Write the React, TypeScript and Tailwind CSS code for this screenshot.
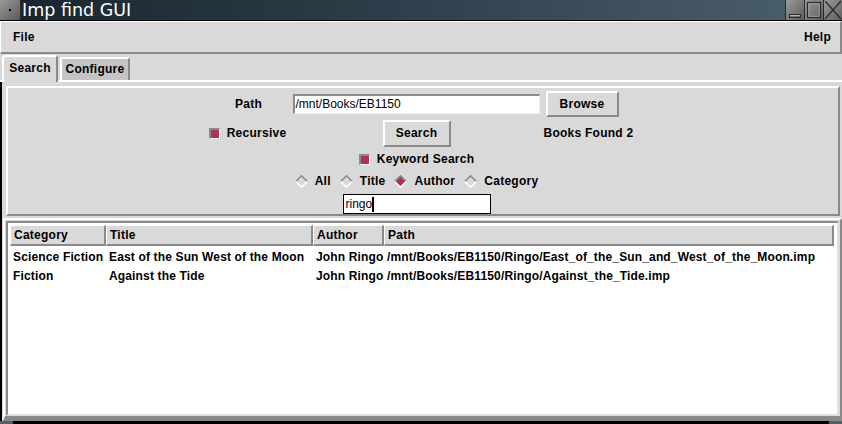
import React from "react";

const raised =
  "border-t-2 border-l-2 border-b-2 border-r-2 border-t-white border-l-white border-b-[#8a8a8a] border-r-[#8a8a8a]";

function Check() {
  return (
    <span className="inline-block w-[11px] h-[11px] border-t-2 border-l-2 border-t-[#8a8a8a] border-l-[#8a8a8a] border-b border-r border-b-white border-r-white bg-[#b03060]" />
  );
}

function Radio({ on }: { on?: boolean }) {
  return (
    <svg width="13" height="13" viewBox="0 0 13 13" className="block">
      <polygon points="6.5,0.8 12.2,6.5 6.5,12.2 0.8,6.5" fill={on ? "#b03060" : "#d9d9d9"} />
      <polyline points="0.8,6.5 6.5,0.8 12.2,6.5" fill="none" stroke="#8a8a8a" strokeWidth="1.6" />
      <polyline points="0.8,6.5 6.5,12.2 12.2,6.5" fill="none" stroke="#ffffff" strokeWidth="1.6" />
    </svg>
  );
}

function WinButton({ kind }: { kind: "min" | "max" | "close" }) {
  return (
    <div className="w-[19px] h-[20px] border-l border-l-[#2a2a2a] bg-linear-to-br from-[#9a9a9a] to-[#5e5e5e]">
      <svg width="18" height="20" viewBox="0 0 18 20" className="block">
        {kind === "min" && (
          <>
            <rect x="3.5" y="14.5" width="11" height="3" fill="none" stroke="#2b2b2b" />
            <line x1="4" y1="15.5" x2="14" y2="15.5" stroke="#b8b8b8" />
          </>
        )}
        {kind === "max" && (
          <>
            <rect x="2.5" y="2.5" width="13" height="15" fill="none" stroke="#2b2b2b" strokeWidth="1.2" />
            <rect x="3.8" y="3.8" width="10.4" height="12.4" fill="none" stroke="#a8a8a8" strokeWidth="0.8" />
          </>
        )}
        {kind === "close" && (
          <>
            <line x1="1" y1="1" x2="17" y2="19" stroke="#2b2b2b" strokeWidth="1.2" />
            <line x1="17" y1="1" x2="1" y2="19" stroke="#2b2b2b" strokeWidth="1.2" />
          </>
        )}
      </svg>
    </div>
  );
}

export default function App() {
  const cols = [
    { name: "Category", w: "w-[96px]" },
    { name: "Title", w: "w-[207px]" },
    { name: "Author", w: "w-[71px]" },
    { name: "Path", w: "w-[450px]" },
  ];
  const rows = [
    [
      "Science Fiction",
      "East of the Sun West of the Moon",
      "John Ringo",
      "/mnt/Books/EB1150/Ringo/East_of_the_Sun_and_West_of_the_Moon.imp",
    ],
    ["Fiction", "Against the Tide", "John Ringo", "/mnt/Books/EB1150/Ringo/Against_the_Tide.imp"],
  ];

  return (
    <div className="w-[842px] h-[424px] overflow-hidden bg-[#d9d9d9] flex flex-col font-['Liberation_Sans',Arial,sans-serif] text-[12px] font-bold tracking-[0.25px] text-black">
      {/* Title bar */}
      <div className="h-[21px] shrink-0 flex border-b border-b-black bg-linear-to-r from-[#18252e] via-[#2f414c] to-[#4d616c]">
        <div className="w-[21px] h-[20px] flex items-center justify-center bg-linear-to-br from-[#9a9a9a] to-[#5a5a5a] border-r border-r-[#2a2a2a]">
          <span className="w-[2px] h-[2px] bg-black" />
        </div>
        <div className="flex-1 pl-[1px] text-white font-['DejaVu_Sans',sans-serif] font-normal tracking-normal text-[17.5px] leading-[20px]">
          Imp find GUI
        </div>
        <div className="flex">
          <WinButton kind="min" />
          <WinButton kind="max" />
          <WinButton kind="close" />
        </div>
      </div>

      {/* Menu bar */}
      <div className="h-[33px] shrink-0 flex items-center justify-between pl-[12px] pr-[9px] border-t border-t-white border-l border-l-white border-b-2 border-b-[#8a8a8a] border-r-2 border-r-[#8a8a8a]">
        <span>File</span>
        <span>Help</span>
      </div>

      {/* Tabs */}
      <div className="h-[26px] shrink-0 flex items-end pl-[2px] gap-[2px]">
        <div className="relative z-10 h-[27px] -mb-[2px] w-[56px] bg-[#d9d9d9] rounded-t-[3px] border-t-2 border-l-2 border-r-2 border-t-white border-l-white border-r-[#8a8a8a] flex justify-center pt-[4px] leading-[14px]">
          Search
        </div>
        <div className="h-[23px] w-[70px] bg-[#c4c4c4] rounded-t-[3px] border-t-2 border-l-2 border-r-2 border-t-white border-l-white border-r-[#8a8a8a] flex justify-center pt-[3px] leading-[14px]">
          Configure
        </div>
      </div>

      {/* Page */}
      <div className="flex-1 flex flex-col border-t-2 border-t-white">
        <div className="flex-1 flex flex-col pt-[4px] border-l-2 border-l-black">
          {/* Search panel */}
          <div className={`h-[130px] shrink-0 ml-[4px] mr-[2px] ${raised} pt-[2px] pr-[5px] flex justify-center`}>
            <div className="grid grid-cols-[88px_248px_96px] grid-rows-[28px_30px_22px_22px_22px] items-center">
              <span className="justify-self-center">Path</span>
              <div className="w-[247px] h-[20px] bg-white border-t-2 border-l-2 border-t-[#8a8a8a] border-l-[#8a8a8a] border-b border-r border-b-[#eeeeee] border-r-[#eeeeee] pl-[1px] font-normal tracking-normal leading-[16px]">
                /mnt/Books/EB1150
              </div>
              <div className={`justify-self-start ml-[5px] w-[73px] h-[26px] ${raised} flex items-center justify-center`}>
                Browse
              </div>

              <div className="justify-self-center flex items-center gap-[7px] pr-[2px]">
                <Check />
                <span>Recursive</span>
              </div>
              <div className={`justify-self-center w-[68px] h-[27px] ${raised} flex items-center justify-center`}>
                Search
              </div>
              <span className="justify-self-center whitespace-nowrap">Books Found 2</span>

              <div className="col-start-2 justify-self-center flex items-center gap-[7px]">
                <Check />
                <span>Keyword Search</span>
              </div>

              <div className="col-start-2 justify-self-center flex items-center gap-[9px] whitespace-nowrap">
                <div className="flex items-center gap-[7px]">
                  <Radio />
                  <span>All</span>
                </div>
                <div className="flex items-center gap-[7px]">
                  <Radio />
                  <span>Title</span>
                </div>
                <div className="flex items-center gap-[7px]">
                  <Radio on />
                  <span>Author</span>
                </div>
                <div className="flex items-center gap-[7px]">
                  <Radio />
                  <span>Category</span>
                </div>
              </div>

              <div className="col-start-2 justify-self-center self-end w-[148px] h-[20px] bg-white border border-black flex items-center pl-[2px] font-normal tracking-normal leading-[16px]">
                <span>ringo</span>
                <span className="w-[2px] h-[15px] bg-black" />
              </div>
            </div>
          </div>

          {/* Result list */}
          <div className="flex-1 mt-[2px] ml-[1px] border-t-2 border-l-2 border-t-white border-l-white border-r-2 border-r-[#8a8a8a] border-b-[5px] border-b-[#8a8a8a] flex flex-col">
            <div className="flex-1 m-[1px] mb-0 border-t-2 border-l-2 border-t-[#8a8a8a] border-l-[#8a8a8a] border-r-2 border-r-[#e0e0e0] border-b-2 border-b-[#e0e0e0] bg-white p-[2px] flex flex-col">
              <div className="flex h-[21px] shrink-0">
                {cols.map((c) => (
                  <div
                    key={c.name}
                    className={`${c.w} h-[21px] bg-[#d9d9d9] border-t border-l border-t-white border-l-white border-b-2 border-r-2 border-b-[#8a8a8a] border-r-[#8a8a8a] pl-[3px] leading-[18px]`}
                  >
                    {c.name}
                  </div>
                ))}
              </div>
              <div className="pt-[1px] flex flex-col tracking-[0.15px]">
                {rows.map((r, i) => (
                  <div key={i} className="flex h-[19px] items-center whitespace-nowrap">
                    {r.map((v, j) => (
                      <div key={j} className={`${cols[j].w} pl-[3px] overflow-hidden`}>
                        {v}
                      </div>
                    ))}
                  </div>
                ))}
              </div>
            </div>
          </div>
        </div>
        {/* window frame bottom */}
        <div className="h-[3px] shrink-0 bg-black flex justify-between">
          <span className="w-[13px] bg-[#4f626d]" />
          <span className="w-[13px] bg-[#4f626d]" />
        </div>
      </div>
    </div>
  );
}
